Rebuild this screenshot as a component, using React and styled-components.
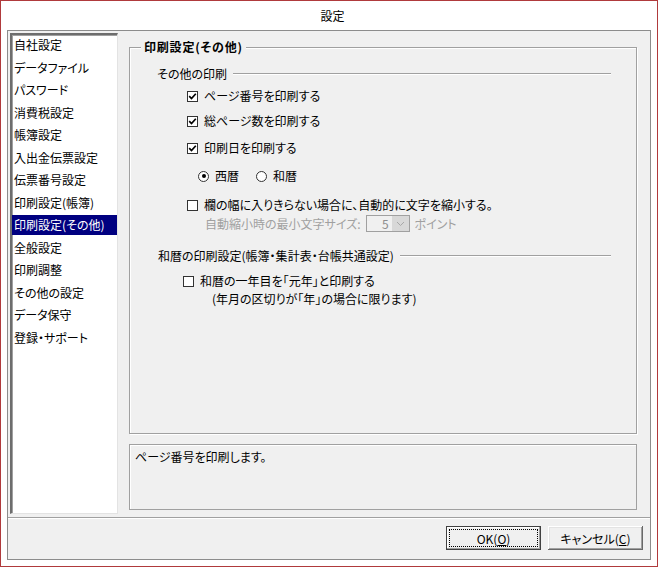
import React from 'react'
import styled, { createGlobalStyle } from 'styled-components'

const GlobalStyle = createGlobalStyle`
    html, body {
        margin: 0;
        padding: 0;
        background: #fff;
    }
    body {
        font-family: "Noto Sans CJK JP", "Noto Sans", sans-serif;
        font-size: 12px;
        color: #000;
        font-feature-settings: "palt";
    }
    * {
        box-sizing: border-box;
    }
`

const menuItems = [
    '自社設定',
    'データファイル',
    'パスワード',
    '消費税設定',
    '帳簿設定',
    '入出金伝票設定',
    '伝票番号設定',
    '印刷設定(帳簿)',
    '印刷設定(その他)',
    '全般設定',
    '印刷調整',
    'その他の設定',
    'データ保守',
    '登録・サポート',
]

const CheckBox = ({ checked }) => (
    <Box>
        {checked && (
            <svg width="9" height="9" viewBox="0 0 9 9">
                <polyline points="1.2,4.2 3.5,6.6 7.8,1.8" fill="none" stroke="#000" strokeWidth="1.7" />
            </svg>
        )}
    </Box>
)

const Radio = ({ checked }) => <Circle>{checked && <Dot />}</Circle>

const App = () => {
    const selected = 8

    return (
        <React.Fragment>
            <GlobalStyle />
            <Window>
                <TitleBar>設定</TitleBar>
                <Client>
                    <Top>
                        <ListBox>
                            {menuItems.map((item, idx) => (
                                <Item key={item} $active={idx === selected}>
                                    {item}
                                </Item>
                            ))}
                        </ListBox>
                        <RightCol>
                            <Group>
                                <Legend>印刷設定(その他)</Legend>
                                <SectionHead $indent={27} $mt={17}>
                                    <span>その他の印刷</span>
                                    <Rule />
                                </SectionHead>
                                <Row $indent={57} $mt={6}>
                                    <CheckBox checked />
                                    <Label>ページ番号を印刷する</Label>
                                </Row>
                                <Row $indent={57} $mt={9}>
                                    <CheckBox checked />
                                    <Label>総ページ数を印刷する</Label>
                                </Row>
                                <Row $indent={57} $mt={11}>
                                    <CheckBox checked />
                                    <Label>印刷日を印刷する</Label>
                                </Row>
                                <Row $indent={68} $mt={12}>
                                    <RadioItem>
                                        <Radio checked />
                                        <Label>西暦</Label>
                                    </RadioItem>
                                    <RadioItem>
                                        <Radio />
                                        <Label>和暦</Label>
                                    </RadioItem>
                                </Row>
                                <Row $indent={57} $mt={13}>
                                    <CheckBox />
                                    <Label>欄の幅に入りきらない場合に、自動的に文字を縮小する。</Label>
                                </Row>
                                <SubRow $indent={75} $mt={2}>
                                    <Muted>自動縮小時の最小文字サイズ:</Muted>
                                    <Combo>
                                        <ComboValue>5</ComboValue>
                                        <ComboButton>
                                            <svg width="9" height="6" viewBox="0 0 9 6">
                                                <polyline points="1,1 4.5,4.5 8,1" fill="none" stroke="#a8a8a8" strokeWidth="1" />
                                            </svg>
                                        </ComboButton>
                                    </Combo>
                                    <Muted>ポイント</Muted>
                                </SubRow>
                                <SectionHead $indent={28} $mt={16}>
                                    <span>和暦の印刷設定(帳簿・集計表・台帳共通設定)</span>
                                    <Rule />
                                </SectionHead>
                                <Row $indent={53} $mt={9}>
                                    <CheckBox />
                                    <Label>和暦の一年目を「元年」と印刷する</Label>
                                </Row>
                                <Note $indent={82} $mt={2}>
                                    (年月の区切りが「年」の場合に限ります)
                                </Note>
                            </Group>
                            <Description>ページ番号を印刷します。</Description>
                        </RightCol>
                    </Top>
                    <Footer>
                        <Button $default>
                            <Focus>
                                OK(<u>O</u>)
                            </Focus>
                        </Button>
                        <Button>
                            キャンセル(<u>C</u>)
                        </Button>
                    </Footer>
                </Client>
            </Window>
        </React.Fragment>
    )
}

const Window = styled.div`
    width: 658px;
    height: 567px;
    border: 1px solid #b03a3c;
    background: #fff;
    display: flex;
    flex-direction: column;
`

const TitleBar = styled.div`
    height: 29px;
    display: flex;
    align-items: center;
    justify-content: center;
    padding-left: 7px;
    font-size: 12px;
    color: #000;
`

const Client = styled.div`
    margin: 0 6px;
    height: 530px;
    border: 1px solid #8c8c8c;
    background: #f0f0f0;
    display: flex;
    flex-direction: column;
`

const Top = styled.div`
    height: 486px;
    display: flex;
    align-items: flex-start;
    padding: 2px 0 0 2px;
`

const ListBox = styled.div`
    width: 108px;
    height: 481px;
    background: #fff;
    border-top: 2px solid #6d6d6d;
    border-left: 2px solid #6d6d6d;
    border-right: 1px solid #e3e3e3;
    border-bottom: 1px solid #e3e3e3;
    box-shadow: inset 1px 1px #a0a0a0;
    display: flex;
    flex-direction: column;
`

const Item = styled.div`
    height: 20px;
    line-height: 19px;
    margin-bottom: 2.5px;
    padding-left: 2px;
    white-space: nowrap;
    background: ${(p) => (p.$active ? '#000080' : 'transparent')};
    color: ${(p) => (p.$active ? '#fff' : '#000')};
`

const RightCol = styled.div`
    width: 508px;
    margin-left: 11px;
    padding-top: 14px;
    display: flex;
    flex-direction: column;
    gap: 10px;
`

const Group = styled.div`
    position: relative;
    height: 387px;
    border: 1px solid #a0a0a0;
    box-shadow: inset 1px 1px #fff, 1px 1px #fff;
    display: flex;
    flex-direction: column;
    padding: 1px 25px 0 0;
`

const Legend = styled.div`
    position: absolute;
    left: 11px;
    top: -9px;
    padding: 0 3px;
    background: #f0f0f0;
    font-weight: 700;
    letter-spacing: 0.8px;
    line-height: 16px;
`

const SectionHead = styled.div`
    display: flex;
    align-items: center;
    gap: 6px;
    height: 16px;
    line-height: 16px;
    margin-top: ${(p) => p.$mt}px;
    padding-left: ${(p) => p.$indent}px;
    white-space: nowrap;
`

const Rule = styled.div`
    flex: 1;
    height: 2px;
    border-top: 1px solid #a0a0a0;
    border-bottom: 1px solid #fff;
`

const Row = styled.div`
    display: flex;
    align-items: center;
    height: 16px;
    line-height: 16px;
    margin-top: ${(p) => p.$mt}px;
    padding-left: ${(p) => p.$indent}px;
    white-space: nowrap;
`

const Box = styled.div`
    width: 11px;
    height: 11px;
    border: 1px solid #333;
    background: #fff;
    display: flex;
    align-items: center;
    justify-content: center;
    flex-shrink: 0;
`

const Label = styled.span`
    margin-left: 6px;
`

const RadioItem = styled.div`
    display: flex;
    align-items: center;
    margin-right: 17px;
`

const Circle = styled.div`
    width: 11px;
    height: 11px;
    border: 1px solid #333;
    border-radius: 50%;
    background: #fff;
    display: flex;
    align-items: center;
    justify-content: center;
`

const Dot = styled.div`
    width: 4px;
    height: 4px;
    border-radius: 50%;
    background: #000;
`

const SubRow = styled.div`
    display: flex;
    align-items: center;
    height: 17px;
    margin-top: ${(p) => p.$mt}px;
    padding-left: ${(p) => p.$indent}px;
    gap: 5px;
    white-space: nowrap;
`

const Muted = styled.span`
    color: #a0a0a0;
`

const Combo = styled.div`
    width: 44px;
    height: 17px;
    border: 1px solid #a0a0a0;
    background: #f0f0f0;
    display: flex;
`

const ComboValue = styled.div`
    flex: 1;
    text-align: right;
    padding-right: 3px;
    line-height: 15px;
    color: #8d8d8d;
`

const ComboButton = styled.div`
    width: 17px;
    background: #d8d8d8;
    display: flex;
    align-items: center;
    justify-content: center;
`

const Note = styled.div`
    height: 16px;
    line-height: 16px;
    margin-top: ${(p) => p.$mt}px;
    padding-left: ${(p) => p.$indent}px;
    white-space: nowrap;
`

const Description = styled.div`
    height: 66px;
    border: 1px solid #a0a0a0;
    box-shadow: inset 1px 1px #fff;
    padding: 4px 5px;
    line-height: 16px;
`

const Footer = styled.div`
    flex: 1;
    border-top: 1px solid #a0a0a0;
    box-shadow: inset 0 1px #fff;
    display: flex;
    justify-content: flex-end;
    align-items: flex-start;
    gap: 7px;
    padding: 8px 7px 0 0;
`

const Button = styled.div`
    width: 95px;
    height: 24px;
    background: #f0f0f0;
    display: flex;
    align-items: center;
    justify-content: center;
    padding: 3px;
    box-shadow: ${(p) =>
        p.$default
            ? 'inset -1px -1px #404040, inset 1px 1px #404040, inset -2px -2px #a0a0a0, inset 2px 2px #fff'
            : 'inset -1px -1px #696969, inset 1px 1px #fff, inset -2px -2px #a0a0a0, inset 2px 2px #e3e3e3'};
    white-space: nowrap;
`

const Focus = styled.div`
    width: 100%;
    height: 100%;
    border: 1px dotted #000;
    display: flex;
    align-items: center;
    justify-content: center;
`

export default App
